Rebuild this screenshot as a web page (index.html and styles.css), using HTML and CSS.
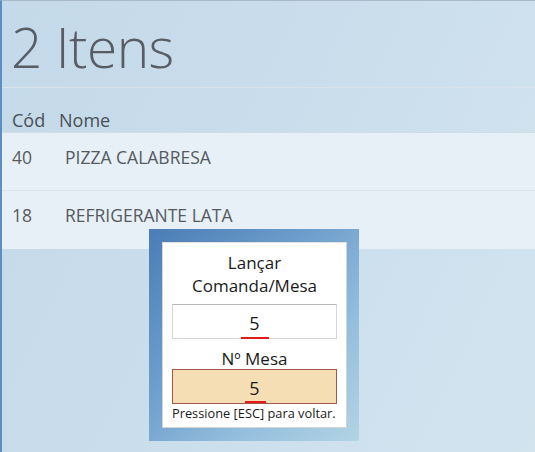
FILE: index.html
```html
<!DOCTYPE html>
<html lang="pt">
<head>
<meta charset="utf-8">
<link rel="stylesheet" href="styles.css">
</head>
<body>
<div class="screen">
  <div class="title-bar">
    <h1 class="title">2 Itens</h1>
  </div>
  <div class="grid-head">
    <span class="col-cod">Cód</span>
    <span class="col-nome">Nome</span>
  </div>
  <div class="rows">
    <div class="row">
      <span class="cell-cod">40</span>
      <span class="cell-nome">PIZZA CALABRESA</span>
    </div>
    <div class="row">
      <span class="cell-cod">18</span>
      <span class="cell-nome">REFRIGERANTE LATA</span>
    </div>
  </div>

  <div class="dialog">
    <div class="dialog-panel">
      <div class="dialog-title">Lançar<br>Comanda/Mesa</div>
      <div class="field field-plain"><span class="val">5</span></div>
      <div class="dialog-label">Nº Mesa</div>
      <div class="field field-active"><span class="val">5</span></div>
      <div class="hint">Pressione [ESC] para voltar.</div>
    </div>
  </div>
</div>
</body>
</html>
```
FILE: styles.css
```css
* { box-sizing: border-box; }
html, body { margin: 0; padding: 0; }
body {
  width: 535px;
  height: 452px;
  overflow: hidden;
  font-family: "Open Sans", "Noto Sans", sans-serif;
}
.screen {
  position: relative;
  width: 535px;
  height: 452px;
  border-top: 1px solid #a9b9c8;
  border-left: 2px solid #5c8ec4;
  background: linear-gradient(115deg, #c4d9e9 0%, #cadeec 50%, #d3e4ef 100%);
}
.title-bar {
  height: 87px;
  border-bottom: 1px solid #d9e2ea;
  padding-left: 9px;
  padding-top: 7px;
}
.title {
  margin: 0;
  font-weight: 300;
  font-size: 55px;
  line-height: 78px;
  color: #585d64;
  letter-spacing: -0.5px;
}
.grid-head {
  height: 44px;
  display: flex;
  align-items: flex-end;
  padding: 0 0 0 10px;
  font-size: 18px;
  line-height: 24px;
  color: #4a4f55;
}
.col-cod { width: 47px; }
.rows { display: flex; flex-direction: column; }
.row {
  height: 59px;
  display: flex;
  align-items: flex-start;
  padding: 13px 0 0 10px;
  background: #e8f0f7;
  border-top: 1px solid #dde5ec;
  font-size: 17.5px;
  line-height: 22px;
  color: #555a60;
}
.row:first-child { border-top: 1px solid #d0dce6; height: 58px; }
.cell-cod { width: 53px; }

.dialog {
  position: absolute;
  left: 147px;
  top: 228px;
  width: 210px;
  height: 212px;
  padding: 13px;
  background: linear-gradient(135deg, #4a7db6 0%, #6f9fcc 40%, #94bedd 70%, #b2d4e4 100%);
}
.dialog-panel {
  width: 185px;
  height: 186px;
  background: #ffffff;
  border: 1px solid #d4d4d4;
  border-top-color: #e2e2e2;
  padding: 8px 9px 0 9px;
  display: flex;
  flex-direction: column;
  align-items: center;
  color: #1a1a1a;
}
.dialog-title {
  text-align: center;
  font-size: 17px;
  line-height: 23px;
}
.dialog-label {
  font-size: 17px;
  line-height: 23px;
  margin-top: 8px;
}
.field {
  position: relative;
  width: 165px;
  height: 35px;
  display: flex;
  justify-content: center;
  align-items: center;
  font-size: 18px;
}
.field-plain {
  margin-top: 7px;
  background: #ffffff;
  border: 1px solid #d6d6d6;
  border-top-color: #b8b8b8;
}
.field-active {
  margin-top: -1px;
  background: #f6deb4;
  border: 1px solid #a0584c;
}
.val { padding-top: 3px; }
.field::after {
  content: "";
  position: absolute;
  bottom: -1px;
  height: 2px;
  background: #e31a1a;
}
.field-plain::after { left: 68px; width: 28px; }
.field-active::after { left: 72px; width: 21px; bottom: 0; }
.hint {
  align-self: flex-start;
  font-size: 12.8px;
  line-height: 16px;
  margin-top: 1px;
  color: #1a1a1a;
}
```
